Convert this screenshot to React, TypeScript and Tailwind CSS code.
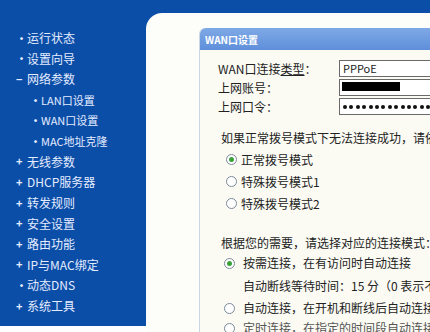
import React from "react";

const menu: { mark: string; label: string; sub?: boolean }[] = [
  { mark: "•", label: "运行状态" },
  { mark: "•", label: "设置向导" },
  { mark: "−", label: "网络参数" },
  { mark: "•", label: "LAN口设置", sub: true },
  { mark: "•", label: "WAN口设置", sub: true },
  { mark: "•", label: "MAC地址克隆", sub: true },
  { mark: "+", label: "无线参数" },
  { mark: "+", label: "DHCP服务器" },
  { mark: "+", label: "转发规则" },
  { mark: "+", label: "安全设置" },
  { mark: "+", label: "路由功能" },
  { mark: "+", label: "IP与MAC绑定" },
  { mark: "•", label: "动态DNS" },
  { mark: "+", label: "系统工具" },
];

function Radio({ checked }: { checked?: boolean }) {
  return (
    <span className="w-[11px] h-[11px] rounded-full border border-[#7a8a9a] bg-white flex items-center justify-center shrink-0">
      {checked && <span className="w-[5px] h-[5px] rounded-full bg-[#3aa03a]" />}
    </span>
  );
}

export default function App() {
  const font = { fontFamily: '"SimSun", "Noto Sans CJK SC", sans-serif' };
  return (
    <div className="w-[430px] h-[332px] overflow-hidden bg-white flex flex-col text-[12px]" style={font}>
      <div className="h-[13px] bg-[#0b4ea8] shrink-0" />
      <div className="flex flex-1 min-h-0">
        {/* 左侧菜单 */}
        <div className="w-[146px] shrink-0 flex flex-col">
          <div className="h-[313px] bg-[#0b4ea8] pt-[15px] flex flex-col">
            {menu.map((m) => (
              <div
                key={m.label}
                className={`h-[20.6px] flex items-center text-[#e4ecff] leading-none ${m.sub ? "pl-[30px]" : "pl-[16px]"}`}
              >
                <span className="w-[11px] text-[11px] font-bold">{m.mark}</span>
                <span className={m.sub ? "text-[11px]" : ""}>{m.label}</span>
              </div>
            ))}
          </div>
        </div>

        {/* 主区域 */}
        <div className="flex-1 bg-[#0b4ea8]">
          <div className="h-full bg-[#fdfdf9] rounded-tl-[16px] pl-[53px] pt-[15px]">
            <div className="w-[300px] h-[320px] rounded-tl-[6px] border-l border-[#c9d6e8] bg-[#fbfbf4] text-[#222]">
              <div className="h-[22px] rounded-tl-[6px] bg-gradient-to-b from-[#7fa9e6] to-[#5e8fdb] text-white text-[10px] flex items-center pl-[5px] font-bold">
                WAN口设置
              </div>

              <div className="pt-[10px] pl-[18px] flex flex-col gap-[2px]">
                <div className="flex items-center h-[17px]">
                  <span className="w-[121px]">
                    WAN口连接<span className="underline">类型</span>：
                  </span>
                  <div className="flex-1 h-[17px] border border-[#6a6a6a] bg-white flex items-center pl-[3px] text-[11px]">
                    PPPoE
                  </div>
                </div>
                <div className="flex items-center h-[17px]">
                  <span className="w-[121px]">上网账号：</span>
                  <div className="flex-1 h-[17px] border border-[#6a6a6a] bg-white flex items-start pl-[2px] pt-[2px]">
                    <div className="w-[58px] h-[9px] bg-black" />
                  </div>
                </div>
                <div className="flex items-center h-[17px]">
                  <span className="w-[121px]">上网口令：</span>
                  <div className="flex-1 min-w-0 h-[17px] border border-[#6a6a6a] bg-white flex items-center gap-[2.4px] pl-[3px] overflow-hidden">
                    {Array.from({ length: 15 }).map((_, i) => (
                      <span key={i} className="w-[4px] h-[4px] rounded-full bg-[#111] shrink-0" />
                    ))}
                  </div>
                </div>
              </div>

              <div className="pl-[21px] mt-[14px] whitespace-nowrap">如果正常拨号模式下无法连接成功，请依次尝试</div>
              <div className="pl-[26px] mt-[4px] flex flex-col gap-[5px]">
                <div className="flex items-center gap-[4px] h-[17px]">
                  <Radio checked />
                  <span>正常拨号模式</span>
                </div>
                <div className="flex items-center gap-[4px] h-[17px]">
                  <Radio />
                  <span>特殊拨号模式1</span>
                </div>
                <div className="flex items-center gap-[4px] h-[17px]">
                  <Radio />
                  <span>特殊拨号模式2</span>
                </div>
              </div>

              <div className="pl-[21px] mt-[22px] whitespace-nowrap">根据您的需要，请选择对应的连接模式：</div>
              <div className="pl-[24px] mt-[1px] flex flex-col">
                <div className="flex items-center gap-[8px] h-[20px]">
                  <Radio checked />
                  <span className="whitespace-nowrap">按需连接，在有访问时自动连接</span>
                </div>
                <div className="pl-[19px] h-[25px] flex items-center whitespace-nowrap">
                  自动断线等待时间：15 分（0 表示不自动断线）
                </div>
                <div className="flex items-center gap-[8px] h-[20px]">
                  <Radio />
                  <span className="whitespace-nowrap">自动连接，在开机和断线后自动连接</span>
                </div>
                <div className="flex items-center gap-[8px] h-[20px] text-[#555]">
                  <Radio />
                  <span className="whitespace-nowrap">定时连接，在指定的时间段自动连接</span>
                </div>
              </div>
            </div>
          </div>
        </div>
      </div>
    </div>
  );
}
